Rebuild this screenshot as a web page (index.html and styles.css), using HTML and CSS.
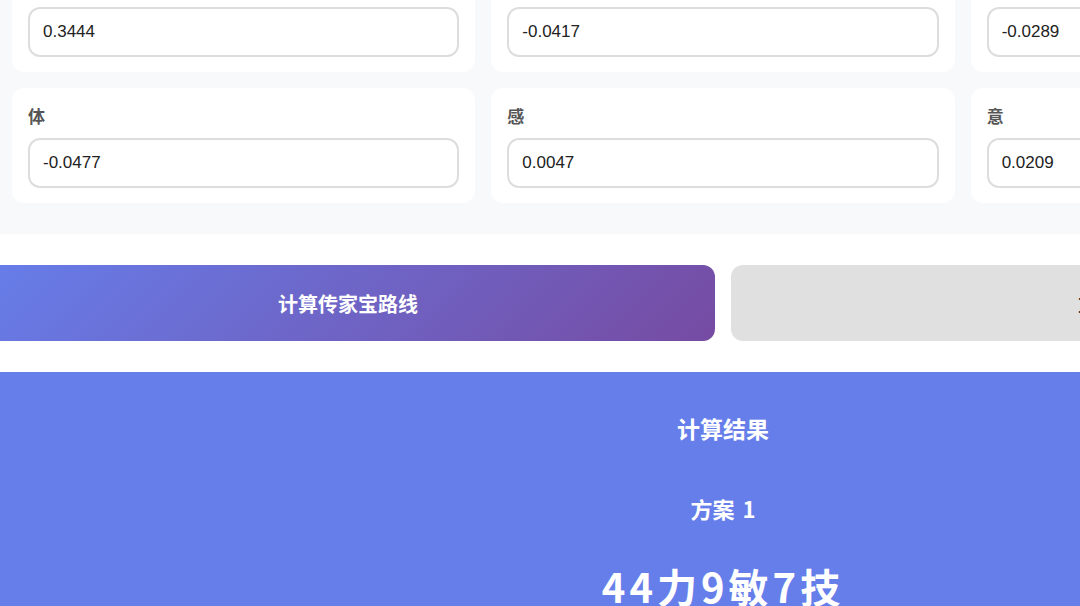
FILE: index.html
```html
<!DOCTYPE html>
<html lang="zh-CN">
<head>
  <meta charset="UTF-8" />
  <title>传家宝路线计算</title>
  <link rel="stylesheet" href="styles.css">
</head>
<body>

<div class="page">

  <!-- Parameters -->
  <section class="params">
    <div class="grid">
      <div class="card">
        <label class="field-label">力</label>
        <input class="field-input" type="text" value="0.3444">
      </div>
      <div class="card">
        <label class="field-label">敏</label>
        <input class="field-input" type="text" value="-0.0417">
      </div>
      <div class="card">
        <label class="field-label">技</label>
        <input class="field-input" type="text" value="-0.0289">
      </div>
      <div class="card">
        <label class="field-label">体</label>
        <input class="field-input" type="text" value="-0.0477">
      </div>
      <div class="card">
        <label class="field-label">感</label>
        <input class="field-input" type="text" value="0.0047">
      </div>
      <div class="card">
        <label class="field-label">意</label>
        <input class="field-input" type="text" value="0.0209">
      </div>
    </div>
  </section>

  <!-- Actions -->
  <div class="actions">
    <button class="btn btn-primary">计算传家宝路线</button>
    <button class="btn btn-reset">重置</button>
  </div>

  <!-- Result -->
  <section class="result">
    <h3 class="result-title">计算结果</h3>
    <h4 class="plan-title">方案 1</h4>
    <div class="plan-value">44力9敏7技</div>
  </section>

</div>

</body>
</html>
```

FILE: styles.css
```css
body {
  margin: 0;
  background: #fff;
  overflow: hidden;
  font-family: "Noto Sans CJK SC", "Noto Sans", sans-serif;
}
.page {
  width: 1484px;
  margin-left: -19px;
}
.params {
  background: #f8f9fa;
  margin: -63px 11px 0;
  padding: 20px 20px 31px;
}
.grid {
  display: grid;
  grid-template-columns: repeat(3, 1fr);
  gap: 16px;
}
.card {
  background: #fff;
  border-radius: 12px;
  padding: 16px 16px 15px;
}
.field-label {
  display: block;
  color: #555;
  font-size: 17px;
  font-weight: bold;
  line-height: 24px;
  margin-bottom: 10px;
}
.field-input {
  display: block;
  width: 100%;
  box-sizing: border-box;
  height: 50px;
  padding: 0 13px;
  border: 2px solid #ddd;
  border-radius: 12px;
  font-family: "Liberation Sans", Arial, sans-serif;
  font-size: 17px;
  color: #222;
  background: #fff;
  outline: none;
}
.actions {
  display: flex;
  gap: 16px;
  margin-top: 31px;
}
.btn {
  flex: 1;
  height: 76px;
  border: none;
  border-radius: 12px;
  font-family: "Noto Sans CJK SC", sans-serif;
  font-size: 20px;
  font-weight: bold;
  cursor: pointer;
}
.btn-primary {
  background: linear-gradient(135deg, #667eea 0%, #764ba2 100%);
  color: #fff;
}
.btn-reset {
  background: #e0e0e0;
  color: #333;
}
.result {
  margin-top: 31px;
  background: #667eea;
  color: #fff;
  text-align: center;
  padding: 40px 20px 40px;
}
.result-title {
  margin: 0;
  font-size: 23px;
  line-height: 32px;
}
.plan-title {
  margin: 48px 0 0;
  font-size: 22px;
  line-height: 32px;
  word-spacing: 3px;
}
.plan-value {
  margin-top: 34px;
  font-size: 40px;
  font-weight: bold;
  line-height: 56px;
  letter-spacing: 4px;
}
```
